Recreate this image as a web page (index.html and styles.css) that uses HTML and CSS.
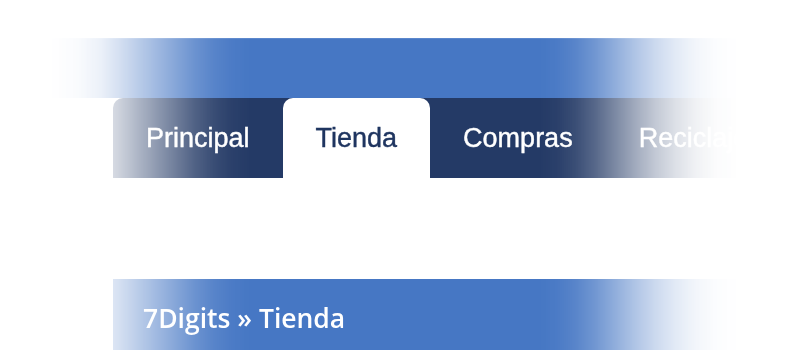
FILE: index.html
```html
<!DOCTYPE html>
<html lang="es">
<head>
<meta charset="utf-8">
<title>7Digits » Tienda</title>
<link rel="stylesheet" href="styles.css">
</head>
<body>
<div class="page">
  <div class="top-band"></div>
  <nav class="tabs">
    <a class="tab">Principal</a>
    <a class="tab tab-active">Tienda</a>
    <a class="tab">Compras</a>
    <a class="tab">Reciclaje</a>
  </nav>
  <div class="crumb-bar">
    <span class="crumb">7Digits » Tienda</span>
  </div>
</div>
</body>
</html>
```

FILE: styles.css
```css
html, body {
  margin: 0;
  padding: 0;
  background: #ffffff;
}

body {
  width: 800px;
  height: 350px;
  overflow: hidden;
}

.page {
  width: 800px;
  height: 350px;
  padding-top: 38px;
  box-sizing: border-box;
  display: flex;
  flex-direction: column;
  -webkit-mask-image: linear-gradient(to right,
    rgba(0,0,0,0) 50px,
    rgba(0,0,0,0.03) 78px,
    rgba(0,0,0,0.1) 100px,
    rgba(0,0,0,0.22) 118px,
    rgba(0,0,0,0.35) 135px,
    rgba(0,0,0,0.5) 155px,
    rgba(0,0,0,0.65) 175px,
    rgba(0,0,0,0.8) 195px,
    rgba(0,0,0,0.91) 215px,
    rgba(0,0,0,0.97) 232px,
    #000 250px,
    #000 540px,
    rgba(0,0,0,0.97) 558px,
    rgba(0,0,0,0.9) 575px,
    rgba(0,0,0,0.77) 595px,
    rgba(0,0,0,0.6) 615px,
    rgba(0,0,0,0.43) 635px,
    rgba(0,0,0,0.28) 655px,
    rgba(0,0,0,0.16) 675px,
    rgba(0,0,0,0.07) 695px,
    rgba(0,0,0,0.02) 715px,
    rgba(0,0,0,0) 738px);
  mask-image: linear-gradient(to right,
    rgba(0,0,0,0) 50px,
    rgba(0,0,0,0.03) 78px,
    rgba(0,0,0,0.1) 100px,
    rgba(0,0,0,0.22) 118px,
    rgba(0,0,0,0.35) 135px,
    rgba(0,0,0,0.5) 155px,
    rgba(0,0,0,0.65) 175px,
    rgba(0,0,0,0.8) 195px,
    rgba(0,0,0,0.91) 215px,
    rgba(0,0,0,0.97) 232px,
    #000 250px,
    #000 540px,
    rgba(0,0,0,0.97) 558px,
    rgba(0,0,0,0.9) 575px,
    rgba(0,0,0,0.77) 595px,
    rgba(0,0,0,0.6) 615px,
    rgba(0,0,0,0.43) 635px,
    rgba(0,0,0,0.28) 655px,
    rgba(0,0,0,0.16) 675px,
    rgba(0,0,0,0.07) 695px,
    rgba(0,0,0,0.02) 715px,
    rgba(0,0,0,0) 738px);
}

.top-band {
  height: 60px;
  background: #4677c4;
  border-top: 1px solid #5b87cc;
  box-sizing: border-box;
}

.tabs {
  display: flex;
  height: 80px;
  margin-left: 113px;
  background: #243a66;
  border-top-left-radius: 10px;
}

.tab {
  padding: 0 33px;
  font-family: "Liberation Sans", Arial, sans-serif;
  font-size: 27px;
  line-height: 80px;
  color: #ffffff;
  white-space: nowrap;
  -webkit-text-stroke: 0.4px currentColor;
}

.tab-active {
  background: #ffffff;
  color: #1f3560;
  border-radius: 10px 10px 0 0;
}

.crumb-bar {
  margin-top: 101px;
  margin-left: 113px;
  flex: 1;
  background: #4677c4;
  padding: 20px 0 0 30px;
}

.crumb {
  font-family: "Open Sans", "Noto Sans", sans-serif;
  font-size: 26.5px;
  font-weight: 600;
  line-height: 38px;
  color: #ffffff;
}
```
